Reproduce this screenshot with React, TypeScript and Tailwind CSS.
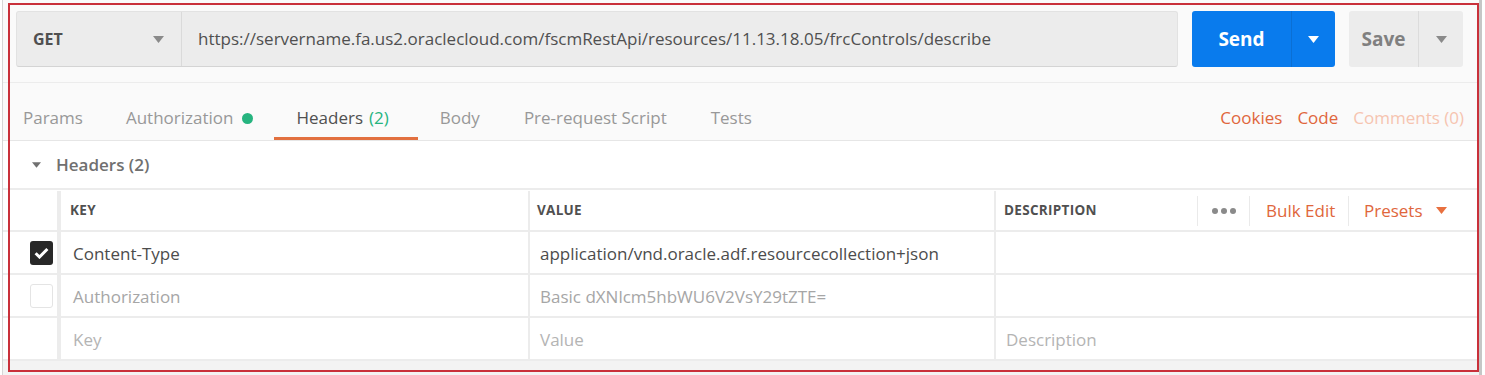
import React from "react";

const tabs = [
  { label: "Params", pad: "pl-[20px] pr-[22px]" },
  { label: "Authorization", dot: true, pad: "px-[21px]" },
  { label: "Headers", count: "(2)", active: true, pad: "pl-[22px] pr-[29px]" },
  { label: "Body", pad: "px-[22px]" },
  { label: "Pre-request Script", pad: "px-[22px]" },
  { label: "Tests", pad: "px-[22px]" },
];

function Caret({ className }: { className: string }) {
  return (
    <svg width="11" height="7" viewBox="0 0 11 7" className={className}>
      <path d="M0 0h11L5.5 7z" fill="currentColor" />
    </svg>
  );
}

function Checkbox({ checked }: { checked?: boolean }) {
  if (checked) {
    return (
      <span className="flex h-[24px] w-[23px] items-center justify-center rounded-[3px] bg-[#282828]">
        <svg width="15" height="12" viewBox="0 0 15 12">
          <path d="M1.6 6.2l3.9 3.8L13.4 2" stroke="#fff" strokeWidth="3" fill="none" />
        </svg>
      </span>
    );
  }
  return <span className="block h-[24px] w-[23px] rounded-[3px] border border-[#e4e4e4] bg-white" />;
}

const rows = [
  { checked: true, key: "Content-Type", value: "application/vnd.oracle.adf.resourcecollection+json", tone: "text-[#4c4c4c]" },
  { checked: false, key: "Authorization", value: "Basic dXNlcm5hbWU6V2VsY29tZTE=", tone: "text-[#a6a6a6]" },
];

export default function App() {
  return (
    <div className="relative flex h-[375px] w-[1485px] overflow-hidden bg-white font-['Open_Sans',sans-serif]">
      <div className="w-[2px] shrink-0 bg-white" />
      <div className="flex w-[1477px] shrink-0 flex-col border-l border-[#d6d6d6]">
        {/* request bar */}
        <div className="flex h-[83px] shrink-0 items-start border-b border-[#ececec] bg-[#fafafa] pl-[13px] pt-[11px]">
          <div className="flex h-[56px] w-[1162px] rounded-[3px] border border-[#e2e2e2] border-b-[#d4d4d4] bg-[#ececec]">
            <div className="flex w-[165px] shrink-0 items-center justify-between border-r border-[#dadada] pl-[16px] pr-[17px]">
              <span className="text-[16px] font-bold text-[#505050]">GET</span>
              <Caret className="text-[#8a8a8a]" />
            </div>
            <div className="flex items-center pl-[16px] text-[17px] text-[#505050]">
              https://servername.fa.us2.oraclecloud.com/fscmRestApi/resources/11.13.18.05/frcControls/describe
            </div>
          </div>
          <div className="ml-[14px] flex h-[56px] w-[143px] rounded-[3px] bg-[#097bed] text-white">
            <div className="flex w-[100px] items-center justify-center border-r border-[#0a6fd4] text-[19px] font-bold">
              Send
            </div>
            <div className="flex flex-1 items-center justify-center">
              <Caret className="text-white" />
            </div>
          </div>
          <div className="ml-[14px] flex h-[56px] w-[114px] rounded-[3px] bg-[#ececec]">
            <div className="flex w-[70px] items-center justify-center border-r border-[#dcdcdc] text-[19px] font-bold text-[#808080]">
              Save
            </div>
            <div className="flex flex-1 items-center justify-center">
              <Caret className="text-[#8a8a8a]" />
            </div>
          </div>
        </div>

        {/* tabs */}
        <div className="flex h-[58px] shrink-0 items-stretch justify-between border-b border-[#e6e6e6] bg-[#fafafa]">
          <div className="flex">
            {tabs.map((t) => (
              <div
                key={t.label}
                className={`flex items-center pt-[16px] text-[17px] ${t.pad} ${
                  t.active ? "border-b-[3px] border-[#e2703f] text-[#505050]" : "pb-[3px] text-[#989898]"
                }`}
              >
                {t.label}
                {t.count && <span className="ml-[6px] text-[#26b47f]">{t.count}</span>}
                {t.dot && <span className="ml-[9px] h-[11px] w-[11px] rounded-full bg-[#26b47f]" />}
              </div>
            ))}
          </div>
          <div className="flex items-center gap-[15px] pr-[15px] pt-[13px] text-[17px]">
            <span className="text-[#e0663c]">Cookies</span>
            <span className="text-[#e0663c]">Code</span>
            <span className="text-[#f6c4b0]">Comments (0)</span>
          </div>
        </div>

        {/* headers section */}
        <div className="flex h-[47px] shrink-0 items-center gap-[15px] bg-white pl-[29px] pt-[1px]">
          <Caret className="h-[6px] w-[9px] text-[#707070]" />
          <span className="text-[17px] font-semibold text-[#707070]">Headers (2)</span>
        </div>

        <div className="border-t-2 border-[#ececec] bg-white">
          <div className="flex h-[42px] border-b-2 border-[#ececec] pt-[1px] text-[13.5px] font-bold uppercase tracking-[0.3px] text-[#505050]">
            <div className="w-[58px] shrink-0 border-r-4 border-[#ececec]" />
            <div className="flex w-[469px] shrink-0 items-center border-r-2 border-[#ececec] pl-[9px]">Key</div>
            <div className="flex w-[466px] shrink-0 items-center border-r-2 border-[#ececec] pl-[7px]">Value</div>
            <div className="flex flex-1 items-center pl-[8px]">
              <span>Description</span>
              <div className="ml-auto flex h-[30px] items-center text-[17px] font-normal normal-case tracking-normal">
                <div className="flex h-full w-[52px] items-center justify-center border-l border-[#eaeaea]">
                  <span className="flex gap-[3px]">
                    <span className="h-[6px] w-[6px] rounded-full bg-[#8a8a8a]" />
                    <span className="h-[6px] w-[6px] rounded-full bg-[#8a8a8a]" />
                    <span className="h-[6px] w-[6px] rounded-full bg-[#8a8a8a]" />
                  </span>
                </div>
                <div className="flex h-full w-[99px] items-center border-l border-[#eaeaea] pl-[16px] text-[#e0663c]">Bulk Edit</div>
                <div className="flex h-full w-[131px] items-center border-l border-[#eaeaea] pl-[15px] text-[#e0663c]">
                  Presets
                  <Caret className="ml-[13px] text-[#e8703f]" />
                </div>
              </div>
            </div>
          </div>

          {rows.map((r) => (
            <div key={r.key} className="flex h-[43px] border-b-2 border-[#ececec] text-[17px]">
              <div className="flex w-[58px] shrink-0 items-center border-r-4 border-[#ececec] pl-[27px] pt-[1px]">
                <Checkbox checked={r.checked} />
              </div>
              <div className={`flex w-[469px] shrink-0 items-center border-r-2 border-[#ececec] pl-[12px] pt-[3px] ${r.tone}`}>{r.key}</div>
              <div className={`flex w-[466px] shrink-0 items-center border-r-2 border-[#ececec] pl-[10px] pt-[3px] ${r.tone}`}>{r.value}</div>
              <div className="flex-1" />
            </div>
          ))}

          <div className="flex h-[43px] border-b-2 border-[#ececec] text-[17px] text-[#b4b4b4]">
            <div className="w-[58px] shrink-0 border-r-4 border-[#ececec]" />
            <div className="flex w-[469px] shrink-0 items-center border-r-2 border-[#ececec] pl-[12px] pt-[3px]">Key</div>
            <div className="flex w-[466px] shrink-0 items-center border-r-2 border-[#ececec] pl-[10px] pt-[3px]">Value</div>
            <div className="flex flex-1 items-center pl-[10px] pt-[3px]">Description</div>
          </div>
        </div>
        <div className="flex-1 bg-[#f3f3f3]" />
      </div>
      <div className="w-[3px] shrink-0 bg-[#c6c6c6]" />
      <div className="flex-1 bg-white" />

      {/* annotation frame */}
      <div className="pointer-events-none absolute left-[8px] top-[3px] h-[369px] w-[1471px] border-2 border-[#c9303a]" />
    </div>
  );
}
